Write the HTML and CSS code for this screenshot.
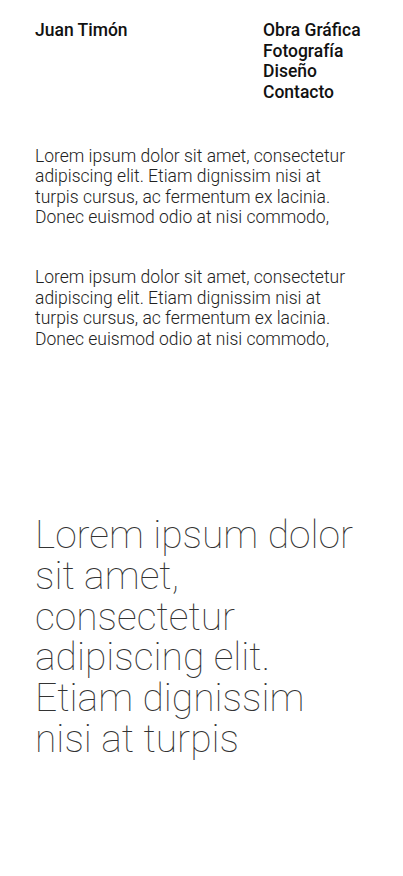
FILE: index.html
```html
<!DOCTYPE html>
<html lang="es">
<head>
<meta charset="utf-8">
<title>Juan Timón</title>
<link rel="stylesheet" href="styles.css">
</head>
<body>
<div class="page">
  <header class="header">
    <div class="name">Juan Timón</div>
    <nav class="nav">
      <a href="#">Obra Gráfica</a>
      <a href="#">Fotografía</a>
      <a href="#">Diseño</a>
      <a href="#">Contacto</a>
    </nav>
  </header>
  <section class="intro">
    <p>Lorem ipsum dolor sit amet, consectetur adipiscing elit. Etiam dignissim nisi at turpis cursus, ac fermentum ex lacinia. Donec euismod odio at nisi commodo,</p>
    <p>Lorem ipsum dolor sit amet, consectetur adipiscing elit. Etiam dignissim nisi at turpis cursus, ac fermentum ex lacinia. Donec euismod odio at nisi commodo,</p>
  </section>
  <p class="big">Lorem ipsum dolor sit amet, consectetur adipiscing elit. Etiam dignissim nisi at turpis</p>
</div>
</body>
</html>
```
FILE: styles.css
```css
html, body {
  margin: 0;
  padding: 0;
  background: #fff;
}
body {
  font-family: Roboto, "Liberation Sans", sans-serif;
}
.page {
  padding: 20px 35px 0 35px;
}
.header {
  display: grid;
  grid-template-columns: 228px 1fr;
  font-size: 17.5px;
  line-height: 20.5px;
  font-weight: 500;
  color: #111;
}
.nav {
  display: flex;
  flex-direction: column;
}
.nav a {
  color: #111;
  text-decoration: none;
}
.intro {
  margin-top: 43.5px;
  display: flex;
  flex-direction: column;
  gap: 39.5px;
}
.intro p {
  margin: 0;
  font-size: 17.5px;
  line-height: 20.5px;
  font-weight: 300;
  color: #222;
}
.big {
  margin: 166px 0 0 0;
  font-size: 39px;
  line-height: 40.8px;
  font-weight: 100;
  color: #333;
}
```
